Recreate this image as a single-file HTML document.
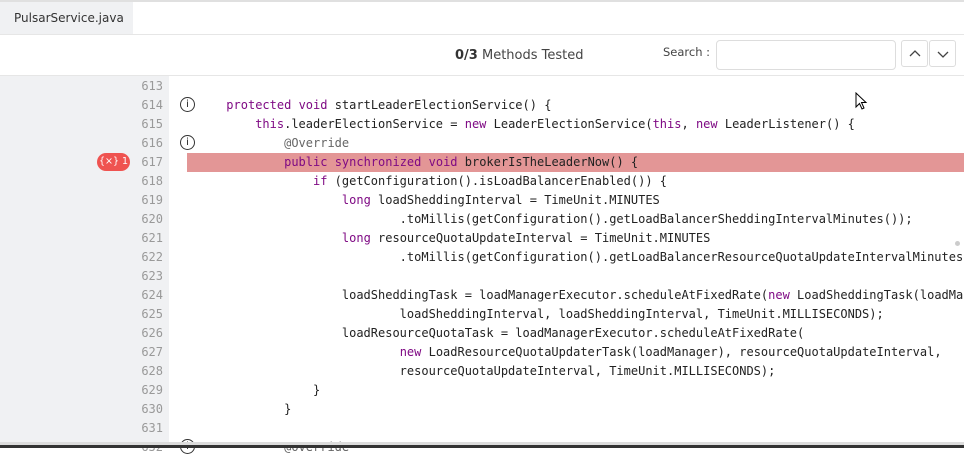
<!DOCTYPE html>
<html><head><meta charset="utf-8"><style>
*{margin:0;padding:0;box-sizing:border-box}
body{width:964px;height:448px;overflow:hidden;background:#fff;font-family:"Liberation Sans","DejaVu Sans",sans-serif;position:relative}
.topline{position:absolute;left:0;top:0;width:964px;height:2px;background:#e0e0e0}
.tab{position:absolute;left:0;top:2px;width:133px;height:32px;background:#f0f1f3;color:#333;line-height:32px;padding-left:14px;font-family:"DejaVu Sans",sans-serif;font-size:12px}
.l1{position:absolute;left:0;top:34px;width:964px;height:1px;background:#e6e6e6}
.l2{position:absolute;left:0;top:75px;width:964px;height:1px;background:#e6e6e6}
.title{position:absolute;left:455px;top:48px;font-family:"DejaVu Sans",sans-serif;font-size:13px;color:#444}
.title b{color:#333}
.slabel{position:absolute;left:663px;top:45px;font-family:"DejaVu Sans",sans-serif;font-size:11.5px;color:#444}
.sbox{position:absolute;left:716px;top:40px;width:180px;height:30px;border:1px solid #ddd;border-radius:4px}
.btn{position:absolute;top:40px;width:27px;height:27px;border:1px solid #ddd;border-radius:3px}
.gutter{position:absolute;left:0;top:76px;width:169px;height:372px;background:#f0f1f3}
.num{position:relative;left:103px;width:60px;text-align:right;font-family:"DejaVu Sans Mono",monospace;font-size:12px;color:#999;line-height:19px;height:19px}
pre{position:absolute;left:197.4px;font-family:"DejaVu Sans Mono",monospace;font-size:12px;color:#222;line-height:19px;white-space:pre}
.k{color:#7f0a84}.a{color:#666}
.hl{position:absolute;left:187px;top:153px;width:777px;height:19px;background:#e39696}
.badge{position:absolute;left:97px;top:153px;width:33px;height:18px;border-radius:9px;background:#ef5350;color:#fff;font-size:9.5px;line-height:18px;text-align:center;font-family:"DejaVu Sans",sans-serif}
.info{position:absolute;left:180px;width:15px;height:15px;border:1.3px solid #333;border-radius:50%;font-size:10px;line-height:13px;text-align:center;color:#222;font-family:"DejaVu Sans",sans-serif}
.sb1{position:absolute;left:0;top:442px;width:964px;height:3px;background:#dcdcdc}
.sb2{position:absolute;left:0;top:445px;width:964px;height:3px;background:#333}
.dot{position:absolute;left:955px;top:241px;width:5px;height:5px;border-radius:50%;background:#ccc}
</style></head><body>
<div class="topline"></div>
<div class="tab">PulsarService.java</div>
<div class="l1"></div>
<div class="title"><b>0/3</b> Methods Tested</div>
<div class="slabel">Search :</div>
<div class="sbox"></div>
<div class="btn" style="left:901px"><svg width="27" height="27"><path d="M8 15 L13 10 L18 15" fill="none" stroke="#444" stroke-width="1.3"/></svg></div>
<div class="btn" style="left:929px"><svg width="27" height="27"><path d="M8 11 L13 16 L18 11" fill="none" stroke="#444" stroke-width="1.3"/></svg></div>
<div class="l2"></div>
<div class="gutter"></div>
<div class="hl"></div>
<div class="badge">{×} 1</div>
<div class="info" style="top:97px">i</div>
<div class="info" style="top:135px">i</div>
<div class="info" style="top:439px">i</div>
<div style="position:absolute;left:0;top:77px">
<div class="num">613</div><div class="num">614</div><div class="num">615</div><div class="num">616</div><div class="num">617</div><div class="num">618</div><div class="num">619</div><div class="num">620</div><div class="num">621</div><div class="num">622</div><div class="num">623</div><div class="num">624</div><div class="num">625</div><div class="num">626</div><div class="num">627</div><div class="num">628</div><div class="num">629</div><div class="num">630</div><div class="num">631</div><div class="num">632</div>
</div>
<pre style="top:77px">

    <span class="k">protected</span> <span class="k">void</span> startLeaderElectionService() {
        <span class="k">this</span>.leaderElectionService = <span class="k">new</span> LeaderElectionService(<span class="k">this</span>, <span class="k">new</span> LeaderListener() {
            <span class="a">@Override</span>
            <span class="k">public</span> <span class="k">synchronized</span> <span class="k">void</span> brokerIsTheLeaderNow() {
                <span class="k">if</span> (getConfiguration().isLoadBalancerEnabled()) {
                    <span class="k">long</span> loadSheddingInterval = TimeUnit.MINUTES
                            .toMillis(getConfiguration().getLoadBalancerSheddingIntervalMinutes());
                    <span class="k">long</span> resourceQuotaUpdateInterval = TimeUnit.MINUTES
                            .toMillis(getConfiguration().getLoadBalancerResourceQuotaUpdateIntervalMinutes

                    loadSheddingTask = loadManagerExecutor.scheduleAtFixedRate(<span class="k">new</span> LoadSheddingTask(loadMan
                            loadSheddingInterval, loadSheddingInterval, TimeUnit.MILLISECONDS);
                    loadResourceQuotaTask = loadManagerExecutor.scheduleAtFixedRate(
                            <span class="k">new</span> LoadResourceQuotaUpdaterTask(loadManager), resourceQuotaUpdateInterval,
                            resourceQuotaUpdateInterval, TimeUnit.MILLISECONDS);
                }
            }

            <span class="a">@Override</span>
</pre>
<div class="dot"></div>
<div class="sb1"></div>
<div class="sb2"></div>
<svg style="position:absolute;left:855px;top:92px" width="14" height="20"><path d="M1 1 L1 15 L4.5 11.5 L7 17 L9 16 L6.5 10.5 L11 10.5 Z" fill="#fff" stroke="#000" stroke-width="1"/></svg>
</body></html>
